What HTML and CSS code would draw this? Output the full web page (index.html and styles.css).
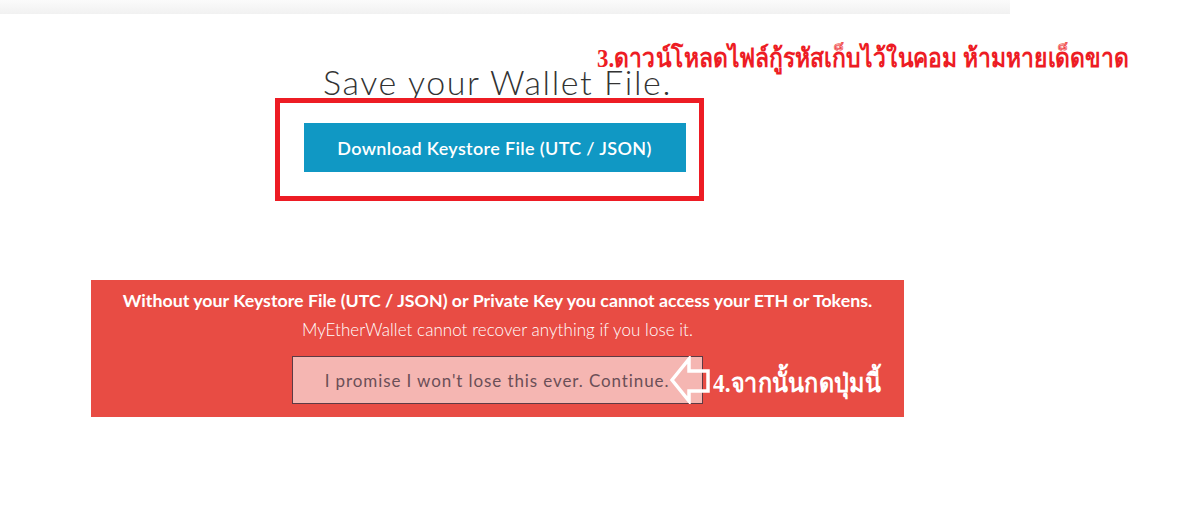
FILE: index.html
```html
<!DOCTYPE html>
<html>
<head>
    <title>Save your Wallet File</title>
    <link rel="stylesheet" href="styles.css">
</head>
<body>
    <div class="top-bar"></div>

    <div class="page">
        <!-- Step 3: download the keystore file -->
        <section class="save-section">
            <h1 class="save-title">Save your Wallet File.</h1>
            <button class="download-button">Download Keystore File (UTC / JSON)</button>
            <div class="highlight-box"></div>
            <p class="note note-download">3.ดาวน์โหลดไฟล์กู้รหัสเก็บไว้ในคอม ห้ามหายเด็ดขาด</p>
        </section>

        <!-- Warning + continue -->
        <section class="warning-box">
            <p class="warning-strong">Without your Keystore File (UTC / JSON) or Private Key you cannot access your ETH or Tokens.</p>
            <p class="warning-light">MyEtherWallet cannot recover anything if you lose it.</p>
            <div class="continue-row">
                <button class="continue-button">I promise I won't lose this ever. Continue.</button>
                <svg class="note-arrow" width="42" height="48" viewBox="0 0 42 48">
                    <path d="M2 24 L19 3 L19 15 L38 15 L38 35 L19 35 L19 45 Z" fill="none" stroke="#fff" stroke-width="3.5" stroke-linejoin="miter"/>
                </svg>
                <p class="note note-continue">4.จากนั้นกดปุ่มนี้</p>
            </div>
        </section>
    </div>
</body>
</html>
```

FILE: styles.css
```css
body {
    margin: 0;
    padding: 0;
    background-color: #fff;
    font-family: Lato, "Open Sans", sans-serif;
}

.top-bar {
    width: 1010px;
    height: 14px;
    background: linear-gradient(to bottom, #fbfbfb, #f1f1f1);
}

.page {
    width: 813px;
    margin-left: 91px;
}

/* Save section */
.save-section {
    position: relative;
    display: flex;
    flex-direction: column;
    align-items: center;
    padding-top: 48px;
    height: 266px;
    box-sizing: border-box;
}

.save-title {
    margin: 0;
    font-size: 34px;
    font-weight: 300;
    letter-spacing: 1.6px;
    color: #333;
    line-height: 40px;
}

.download-button {
    margin-top: 21px;
    margin-right: 6px;
    width: 382px;
    height: 49px;
    background-color: #1098c4;
    color: #fff;
    border: none;
    font-family: Lato, sans-serif;
    font-size: 18px;
    font-weight: 600;
    letter-spacing: 0.35px;
}

/* annotations drawn over the screenshot */
.highlight-box {
    position: absolute;
    left: 184px;
    top: 84px;
    width: 419px;
    height: 93px;
    border: 5px solid #ed1c24;
}

.note {
    margin: 0;
    font-family: "Liberation Serif", serif;
    font-weight: 700;
    white-space: nowrap;
    transform-origin: left top;
}

.note-download {
    position: absolute;
    left: 506px;
    top: 23px;
    font-size: 26px;
    color: #ed1c24;
    transform: scaleX(0.88);
}

/* Warning */
.warning-box {
    height: 137px;
    box-sizing: border-box;
    padding-top: 9px;
    background-color: #e84c44;
    color: #fff;
    text-align: center;
}

.warning-strong {
    margin: 0;
    font-size: 17.8px;
    font-weight: 700;
    line-height: 22px;
}

.warning-light {
    margin: 8px 0 0;
    font-size: 17px;
    font-weight: 300;
    letter-spacing: 0.05px;
    line-height: 22px;
}

.continue-row {
    position: relative;
    display: flex;
    justify-content: center;
    margin-top: 15px;
}

.continue-button {
    width: 411px;
    height: 48px;
    margin-left: -1px;
    background-color: #f5b6b2;
    border: 1px solid #5d3a44;
    color: #6b4f57;
    font-family: Lato, sans-serif;
    font-size: 17px;
    letter-spacing: 0.9px;
}

.note-arrow {
    position: absolute;
    left: 579px;
    top: 0;
}

.note-continue {
    position: absolute;
    left: 622px;
    top: 6px;
    font-size: 26px;
    color: #fff;
    transform: scaleX(0.9);
}
```
